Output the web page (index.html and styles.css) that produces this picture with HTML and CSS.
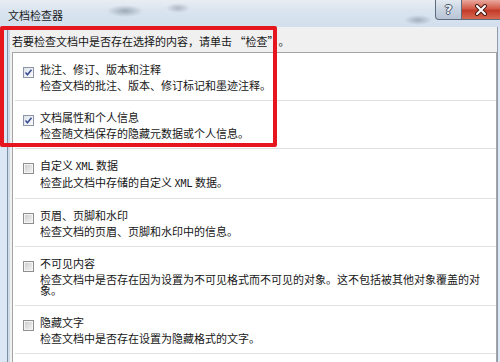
FILE: index.html
```html
<!DOCTYPE html>
<html lang="zh-CN">

<head>
    <meta charset="utf-8">
    <title>文档检查器</title>
    <link rel="stylesheet" href="styles.css">
</head>

<body>
    <div class="window">
        <header class="titlebar">
            <span class="title">文档检查器</span>
            <div class="caption-buttons">
                <button class="btn-help">?</button>
                <button class="btn-close">
                    <svg width="14" height="12" viewBox="0 0 14 12">
                        <path d="M3 2 L11 10 M11 2 L3 10" stroke="#4a1d18" stroke-width="4" stroke-linecap="round" />
                        <path d="M3 2 L11 10 M11 2 L3 10" stroke="#fff" stroke-width="2" stroke-linecap="round" />
                    </svg>
                </button>
            </div>
        </header>

        <div class="frame">
            <section class="client">
                <p class="intro">若要检查文档中是否存在选择的内容，请单击 “检查<span class="quote">”</span>。</p>

                <ul class="inspect-list">
                    <li class="inspect-item">
                        <span class="check checked">
                            <svg width="9" height="9" viewBox="0 0 9 9">
                                <path d="M1.5 4.5 L3.5 6.8 L7.5 1.8" fill="none" stroke="#3b4f96" stroke-width="1.6" />
                            </svg>
                        </span>
                        <div class="item-text">
                            <div class="item-title">批注、修订、版本和注释</div>
                            <div class="item-desc">检查文档的批注、版本、修订标记和墨迹注释。</div>
                        </div>
                    </li>
                    <li class="inspect-item">
                        <span class="check checked">
                            <svg width="9" height="9" viewBox="0 0 9 9">
                                <path d="M1.5 4.5 L3.5 6.8 L7.5 1.8" fill="none" stroke="#3b4f96" stroke-width="1.6" />
                            </svg>
                        </span>
                        <div class="item-text">
                            <div class="item-title">文档属性和个人信息</div>
                            <div class="item-desc">检查随文档保存的隐藏元数据或个人信息。</div>
                        </div>
                    </li>
                    <li class="inspect-item">
                        <span class="check"></span>
                        <div class="item-text">
                            <div class="item-title">自定义 <span class="mono">XML</span> 数据</div>
                            <div class="item-desc">检查此文档中存储的自定义 <span class="mono">XML</span> 数据。</div>
                        </div>
                    </li>
                    <li class="inspect-item">
                        <span class="check"></span>
                        <div class="item-text">
                            <div class="item-title">页眉、页脚和水印</div>
                            <div class="item-desc">检查文档的页眉、页脚和水印中的信息。</div>
                        </div>
                    </li>
                    <li class="inspect-item">
                        <span class="check"></span>
                        <div class="item-text">
                            <div class="item-title">不可见内容</div>
                            <div class="item-desc">检查文档中是否存在因为设置为不可见格式而不可见的对象。这不包括被其他对象覆盖的对象。</div>
                        </div>
                    </li>
                    <li class="inspect-item">
                        <span class="check"></span>
                        <div class="item-text">
                            <div class="item-title">隐藏文字</div>
                            <div class="item-desc">检查文档中是否存在设置为隐藏格式的文字。</div>
                        </div>
                    </li>
                </ul>
            </section>
        </div>

        <!-- rød markering -->
        <div class="highlight"></div>
    </div>
</body>

</html>
```

FILE: styles.css
```css
body {
    margin: 0;
    width: 500px;
    height: 362px;
    overflow: hidden;
    font-family: "Noto Sans CJK SC", "Noto Sans", sans-serif;
    font-size: 11px;
    color: #161616;
    background-color: #dbe7f5;
}

.window {
    position: relative;
    height: 362px;
}

.titlebar {
    height: 27px;
    display: flex;
    justify-content: space-between;
    align-items: flex-start;
    background:
        radial-gradient(ellipse 18px 6px at 125px 11px, rgba(90, 100, 115, .45), transparent),
        radial-gradient(ellipse 12px 5px at 178px 8px, rgba(90, 100, 115, .35), transparent),
        radial-gradient(ellipse 14px 5px at 418px 20px, rgba(90, 100, 115, .4), transparent),
        linear-gradient(#e9edf2, #d9e4f0 40%, #d3dfed);
}

.title {
    padding: 7px 0 0 8px;
    font-size: 11px;
    line-height: 16px;
    color: #1a1a1a;
}

.caption-buttons {
    display: flex;
}

.caption-buttons button {
    height: 20px;
    padding: 0;
    border: 1px solid #5d6b7d;
    border-top: none;
    display: flex;
    align-items: center;
    justify-content: center;
}

.btn-help {
    width: 27px;
    border-bottom-left-radius: 4px;
    background: linear-gradient(#e3e9f0, #c9d4e1 50%, #b8c5d5);
    font-family: "DejaVu Sans", sans-serif;
    font-size: 13px;
    font-weight: bold;
    color: #eef2f6;
    text-shadow: 1px 0 #46546a, -1px 0 #46546a, 0 1px #46546a, 0 -1px #46546a;
}

.btn-close {
    width: 38px;
    border-left: none !important;
    border-right: none !important;
    background: linear-gradient(#e9a99e, #d25a48 45%, #c23a28 55%, #d86a52);
}

.frame {
    display: flex;
    height: 335px;
    border-left: 7px solid #dbe7f5;
    border-right: 2px solid #dbe7f5;
}

.client {
    flex: 1;
    background-color: #f0f0f0;
    border-left: 1px solid #7d8ea6;
    border-right: 1px solid #8e9aa9;
    box-shadow: inset 2px 0 #cfdcec;
    padding: 6px 0 0 4px;
}

.intro {
    margin: 0 0 3px 0;
    line-height: 16px;
}

/* SimSun-agtig fuld bredde for anførselstegn */
.quote {
    display: inline-block;
    width: 11px;
}

.mono {
    font-family: "DejaVu Sans Mono", monospace;
    font-size: 10px;
}

.inspect-list {
    list-style: none;
    margin: 0;
    padding: 0 0 0 2px;
    height: 400px;
    background-color: white;
    border: 1px solid #a5a5a5;
}

.inspect-item {
    display: flex;
    align-items: flex-start;
    padding: 8px 0 9px 8px;
    border-bottom: 1px solid #e0e0e0;
}

.check {
    flex: none;
    width: 11px;
    height: 11px;
    box-sizing: border-box;
    margin-top: 6px;
    border: 1px solid #8e8f8f;
    background: linear-gradient(135deg, #cbcbcb, #f5f5f5);
    box-shadow: inset 0 0 0 1px #f4f4f4;
}

.check.checked {
    border-color: #8d96a8;
    background: linear-gradient(135deg, #dfe3ea, #fafbfc);
    box-shadow: none;
}

.check svg {
    display: block;
}

.item-text {
    margin-left: 6px;
}

.item-title {
    line-height: 17px;
}

.item-desc {
    margin-top: 2px;
    line-height: 11px;
}

.highlight {
    position: absolute;
    left: 0;
    top: 26px;
    width: 277px;
    height: 121px;
    box-sizing: border-box;
    border: 4px solid #e5161d;
    border-radius: 2px;
    pointer-events: none;
}
```
